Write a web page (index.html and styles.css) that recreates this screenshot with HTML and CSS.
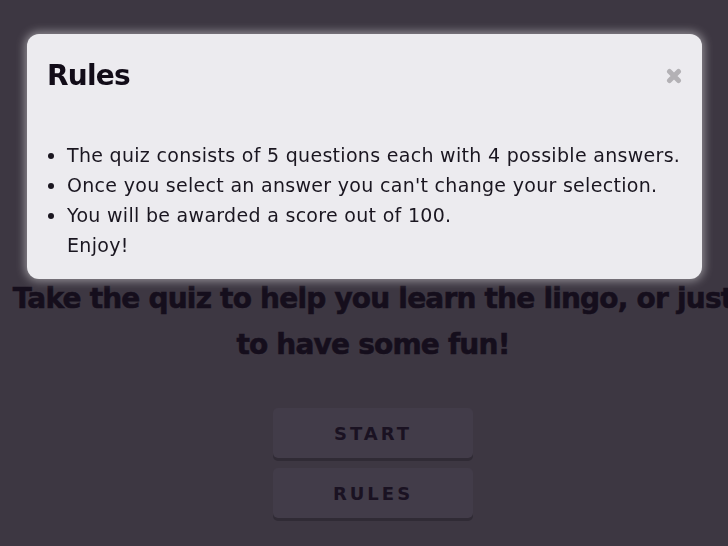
FILE: index.html
```html
<!DOCTYPE html>
<html>
<head>
<meta charset="utf-8">
<link rel="stylesheet" href="styles.css">
</head>
<body>
<main class="home">
  <h1 class="tagline">Take the quiz to help you learn the lingo, or just to have some fun!</h1>
  <div class="actions">
    <button class="btn">START</button>
    <button class="btn">RULES</button>
  </div>
</main>
<div class="modal">
  <div class="modal-head">
    <h2 class="modal-title">Rules</h2>
    <span class="close"><svg width="16" height="16" viewBox="0 0 16 16"><path d="M3.5 3.5 L12.5 12.5 M12.5 3.5 L3.5 12.5" stroke="#b3b1b5" stroke-width="5" stroke-linecap="round"/></svg></span>
  </div>
  <ul class="rules">
    <li>The quiz consists of 5 questions each with 4 possible answers.</li>
    <li>Once you select an answer you can't change your selection.</li>
    <li>You will be awarded a score out of 100.</li>
    <li class="plain">Enjoy!</li>
  </ul>
</div>
</body>
</html>
```
FILE: styles.css
```css
html, body {
  margin: 0;
  padding: 0;
  height: 100%;
  overflow: hidden;
}
body {
  background: #3d3742;
  font-family: "DejaVu Sans", "Liberation Sans", sans-serif;
}
.home {
  display: flex;
  flex-direction: column;
  align-items: center;
  padding-top: 276px;
  width: 746px;
}
.tagline {
  margin: 0;
  font-size: 28px;
  line-height: 46px;
  font-weight: 700;
  color: #150e1c;
  text-align: center;
  letter-spacing: -0.8px;
  -webkit-text-stroke: 0.6px #150e1c;
}
.actions {
  margin-top: 40px;
  display: flex;
  flex-direction: column;
  gap: 10px;
}
.btn {
  width: 200px;
  height: 50px;
  border: none;
  border-radius: 5px;
  background: #423c49;
  box-shadow: 0 3px 0 #302b35;
  font-family: "DejaVu Sans", "Liberation Sans", sans-serif;
  font-weight: 700;
  font-size: 18px;
  letter-spacing: 3px;
  color: #1a1222;
  padding: 0;
}
.modal {
  position: fixed;
  top: 34px;
  left: 27px;
  width: 675px;
  height: 245px;
  box-sizing: border-box;
  background: #ecebef;
  border-radius: 12px;
  box-shadow: 0 0 10px 2px rgba(255,255,255,0.45);
  padding: 20px 20px;
}
.modal-head {
  display: flex;
  justify-content: space-between;
  align-items: center;
}
.modal-title {
  margin: 0;
  font-size: 28px;
  font-weight: 700;
  color: #120c18;
  letter-spacing: -0.8px;
  line-height: 44px;
}
.close {
  display: flex;
}
.rules {
  margin: 42px 0 0 0;
  padding-left: 20px;
  font-size: 19px;
  line-height: 30px;
  letter-spacing: 0.3px;
  color: #1a1620;
}
.rules .plain {
  list-style: none;
}
```
